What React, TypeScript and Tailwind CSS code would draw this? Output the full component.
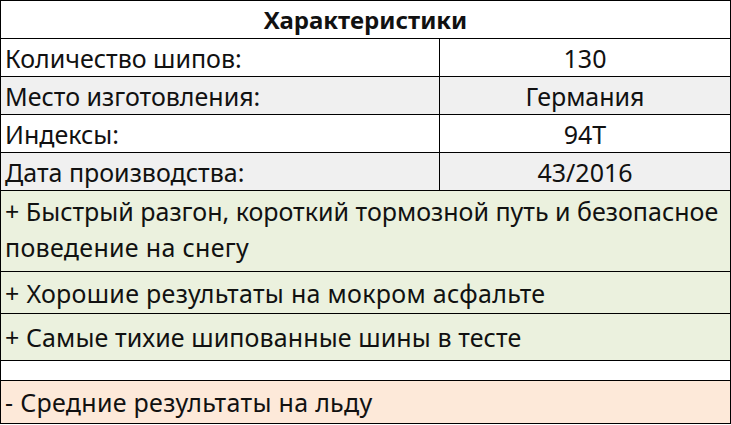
import React from "react";

const font = { fontFamily: '"Noto Sans", "DejaVu Sans", sans-serif' };

function KV({ k, v, bg }: { k: string; v: string; bg: string }) {
  return (
    <div className={`flex h-[38px] border-b border-black ${bg}`}>
      <div className="w-[439px] shrink-0 border-r border-black flex items-center pl-[4px]">{k}</div>
      <div className="flex-1 flex items-center justify-center">{v}</div>
    </div>
  );
}

export default function App() {
  return (
    <div className="w-[731px] h-[425px] bg-white text-[#111] text-[25px] leading-[34px]" style={font}>
      <div className="border-t border-l border-r border-black">
        <div className="h-[38px] border-b border-black flex items-center justify-center font-bold text-[24px] bg-white">
          Характеристики
        </div>
        <KV k="Количество шипов:" v="130" bg="bg-white" />
        <KV k="Место изготовления:" v="Германия" bg="bg-[#f0f0f0]" />
        <KV k="Индексы:" v="94T" bg="bg-white" />
        <KV k="Дата производства:" v="43/2016" bg="bg-[#f0f0f0]" />
        <div className="h-[81px] border-b border-black bg-[#ebf1de] pl-[4px] pt-[2px] leading-[36px] overflow-hidden">
          <div className="whitespace-nowrap">+ Быстрый разгон, короткий тормозной путь и безопасное</div>
          <div className="whitespace-nowrap tracking-[0.3px]">поведение на снегу</div>
        </div>
        <div className="h-[42px] border-b border-black bg-[#ebf1de] pl-[4px] flex items-center tracking-[0.3px]">
          + Хорошие результаты на мокром асфальте
        </div>
        <div className="h-[47px] border-b border-black bg-[#ebf1de] pl-[4px] flex items-center tracking-[0.1px]">
          + Самые тихие шипованные шины в тесте
        </div>
        <div className="h-[20px] border-b border-black bg-white" />
        <div className="h-[43px] border-b border-black bg-[#fde9d9] pl-[4px] flex items-center tracking-[0.3px]">
          - Средние результаты на льду
        </div>
      </div>
    </div>
  );
}
